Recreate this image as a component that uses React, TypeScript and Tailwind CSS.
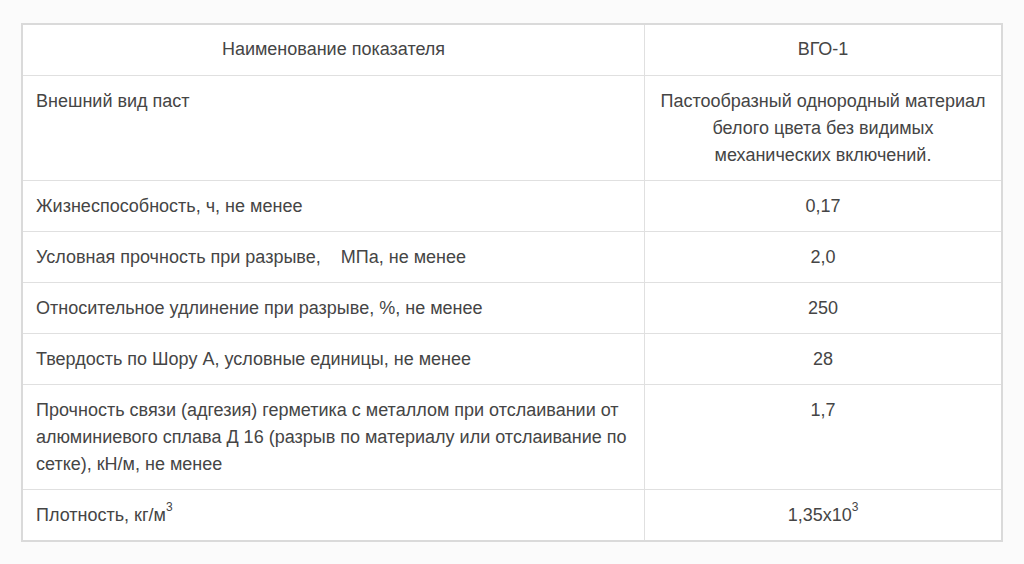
import React from "react";

type Row = { left: React.ReactNode; right: React.ReactNode };

const Sup = ({ children }: { children: React.ReactNode }) => (
  <sup className="text-[12px] relative -top-[3px] align-super leading-none">{children}</sup>
);

const rows: Row[] = [
  {
    left: "Внешний вид паст",
    right: (
      <>
        Пастообразный однородный материал
        <br />
        белого цвета без видимых
        <br />
        механических включений.
      </>
    ),
  },
  { left: "Жизнеспособность, ч, не менее", right: "0,17" },
  {
    left: (
      <>
        Условная прочность при разрыве,{"\u00a0\u00a0\u00a0\u00a0"}МПа, не менее
      </>
    ),
    right: "2,0",
  },
  { left: "Относительное удлинение при разрыве, %, не менее", right: "250" },
  { left: "Твердость по Шору А, условные единицы, не менее", right: "28" },
  {
    left: (
      <>
        Прочность связи (адгезия) герметика с металлом при отслаивании от
        <br />
        алюминиевого сплава Д 16 (разрыв по материалу или отслаивание по
        <br />
        сетке), кН/м, не менее
      </>
    ),
    right: "1,7",
  },
  {
    left: (
      <>
        Плотность, кг/м<Sup>3</Sup>
      </>
    ),
    right: (
      <>
        1,35x10<Sup>3</Sup>
      </>
    ),
  },
];

export default function App() {
  return (
    <div
      className="w-[1024px] h-[564px] bg-[#fbfbfb] pt-[23px] pl-[21px] text-[18px] text-[#454545]"
      style={{ fontFamily: '"Liberation Sans", Arial, sans-serif' }}
    >
      <div className="w-[982px] border-2 border-[#dadada] bg-white">
        <div className="flex border-b border-[#e0e0e0]">
          <div className="w-[622px] border-r border-[#e0e0e0] pt-[11px] pb-[12px] leading-[27px] text-center">
            Наименование показателя
          </div>
          <div className="flex-1 pt-[11px] pb-[12px] leading-[27px] text-center">ВГО-1</div>
        </div>
        {rows.map((r, i) => (
          <div
            key={i}
            className={
              i === rows.length - 1
                ? "flex"
                : "flex border-b border-[#e0e0e0]"
            }
          >
            <div className="w-[622px] border-r border-[#e0e0e0] pt-3 pb-[11px] pl-[13px] pr-2 leading-[27px] whitespace-nowrap">
              {r.left}
            </div>
            <div className="flex-1 pt-3 pb-[11px] px-2 leading-[27px] text-center whitespace-nowrap">
              {r.right}
            </div>
          </div>
        ))}
      </div>
    </div>
  );
}
